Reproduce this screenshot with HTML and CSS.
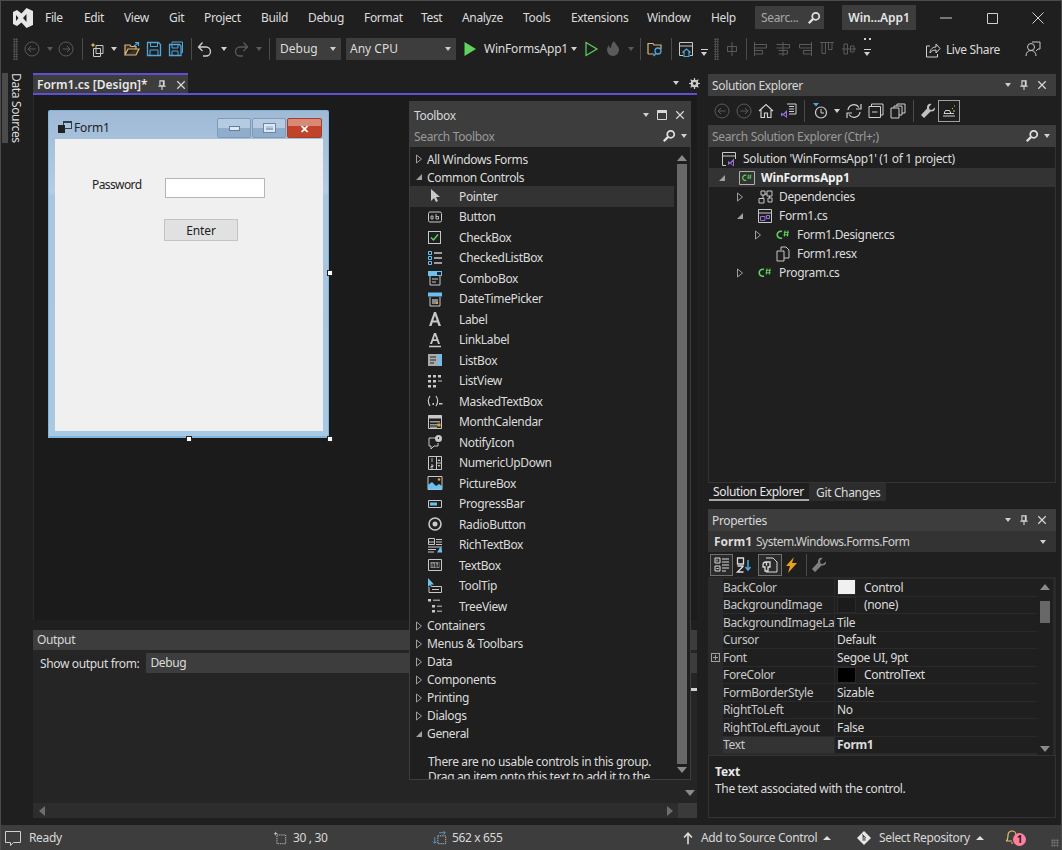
FILE: index.html
```html
<!DOCTYPE html>
<html lang="en">
<head>
    <meta charset="UTF-8">
    <title>WinFormsApp1 - Visual Studio</title>
    <link rel="stylesheet" href="styles.css">
</head>
<body>
<svg class="sprite" width="0" height="0">
    <defs>
        <symbol id="back" viewBox="0 0 16 16"><circle cx="8" cy="8" r="7" fill="none" stroke="currentColor"/><path d="M11.5 8h-7M7 5L4 8l3 3" fill="none" stroke="currentColor"/></symbol>
        <symbol id="fwd" viewBox="0 0 16 16"><circle cx="8" cy="8" r="7" fill="none" stroke="currentColor"/><path d="M4.5 8h7M9 5l3 3-3 3" fill="none" stroke="currentColor"/></symbol>
        <symbol id="close" viewBox="0 0 12 12"><path d="M1.5 1.5l9 9M10.5 1.5l-9 9" stroke="currentColor" stroke-width="1.4"/></symbol>
        <symbol id="pin" viewBox="0 0 12 12"><path d="M3.5 1h5v6h-5zM1.5 7.5h9M6 7.5V12" fill="none" stroke="currentColor" stroke-width="1.3"/><path d="M7 1h1.5v6H7z" fill="currentColor"/></symbol>
        <symbol id="search" viewBox="0 0 16 16"><circle cx="10" cy="6" r="4" fill="none" stroke="currentColor" stroke-width="2"/><path d="M7 9l-5 5" stroke="currentColor" stroke-width="2.6"/></symbol>
        <symbol id="expand" viewBox="0 0 8 10"><path d="M1.5 1v8L6.5 5z" fill="none" stroke="currentColor"/></symbol>
        <symbol id="open" viewBox="0 0 8 10"><path d="M7 2v6H1z" fill="currentColor"/></symbol>
        <symbol id="csharp" viewBox="0 0 16 16"><path d="M7 4.5A3.5 3.5 0 1 0 7 11" fill="none" stroke="currentColor" stroke-width="1.6"/><path d="M10 3.5l-.7 6M13 3.5l-.7 6M8.8 5.3h5M8.6 7.800h5" stroke="currentColor"/></symbol>
        <!-- toolbox icons -->
        <symbol id="t-pointer" viewBox="0 0 16 16"><path d="M4 1v12l3-3 2 4 2-1-2-4h4z" fill="currentColor"/></symbol>
        <symbol id="t-button" viewBox="0 0 16 16"><rect x="1.5" y="3" width="13" height="10" rx="1.5" fill="none" stroke="currentColor"/><path d="M4 7h2v3H4zM9 5v5h2.5V7.5H9" fill="none" stroke="currentColor" stroke-width=".9"/></symbol>
        <symbol id="t-check" viewBox="0 0 16 16"><rect x="1.5" y="2.5" width="12" height="12" fill="none" stroke="currentColor"/><path d="M4 8.5l2.5 2.5L11 5.5" fill="none" stroke="#5fd35f" stroke-width="1.4"/></symbol>
        <symbol id="t-checklist" viewBox="0 0 16 16"><path d="M1.500 1.500h3v3h-3zM1.500 6.500h3v3h-3zM1.500 11.500h3v3h-3z" fill="none" stroke="#6cc0f0"/><path d="M7 3h8M7 8h8M7 13h8" stroke="currentColor" stroke-width="1.5"/></symbol>
        <symbol id="t-combo" viewBox="0 0 16 16"><path d="M1 1h14v5H1z" fill="#6cc0f0"/><path d="M3 6v9h10V6" fill="none" stroke="currentColor"/><path d="M5 9h6M5 12h4" stroke="currentColor"/><path d="M10 2h4v3h-4z" fill="#222"/></symbol>
        <symbol id="t-date" viewBox="0 0 16 16"><path d="M1 1.500h14v4H1z" fill="#6cc0f0"/><path d="M3 6v9h10V6" fill="none" stroke="currentColor"/><path d="M5 8h6v5H5z" fill="#888"/><path d="M9 11h2v2H9z" fill="#f0a030"/></symbol>
        <symbol id="t-label" viewBox="0 0 16 16"><path d="M2 15L7 1h2l5 14h-2.500l-1.200-3.500H5.700L4.500 15zM6.300 9.500h3.400L8 4.500z" fill="currentColor" fill-rule="evenodd"/></symbol>
        <symbol id="t-link" viewBox="0 0 16 16"><path d="M3 12L7 1h2l4 11h-2l-1-3H6l-1 3zM6.600 7.300h2.800L8 3.500z" fill="currentColor" fill-rule="evenodd"/><path d="M2 14.500h12" stroke="currentColor" stroke-width="1.500"/></symbol>
        <symbol id="t-listbox" viewBox="0 0 16 16"><path d="M1 2h14v12H1z" fill="#aaa"/><path d="M3 5h6M3 8h6M3 11h4" stroke="#222"/><path d="M10.500 2.500H15v5h-4.500zM10.500 8.500H15v5h-4.500z" fill="#6cc0f0"/></symbol>
        <symbol id="t-listview" viewBox="0 0 16 16"><path d="M1 2h3v2.500H1zM6 2h3v2.500H6zM11 2h3v2.500h-3zM1 7h3v2.500H1zM6 7h3v2.500H6zM1 12h3v2.500H1zM6 12h3v2.500H6z" fill="currentColor"/><path d="M11 8h4" stroke="currentColor"/></symbol>
        <symbol id="t-masked" viewBox="0 0 16 16"><path d="M3 3C1 6 1 10 3 13M9 3c2 3 2 7 0 10" fill="none" stroke="currentColor" stroke-width="1.200"/><path d="M5.500 10h1.500v2H5.500zM12 10h3.500v1.500H12z" fill="currentColor"/></symbol>
        <symbol id="t-month" viewBox="0 0 16 16"><path d="M1.500 1.500h13v13h-13z" fill="none" stroke="currentColor"/><path d="M1.500 1.500h13v3h-13z" fill="currentColor"/><path d="M3 7h10v1.500H3zM3 10h10v1.500H3zM3 12.500h7V14H3z" fill="#999"/><path d="M10.500 9.500h3v3h-3z" fill="#f0a030"/></symbol>
        <symbol id="t-notify" viewBox="0 0 16 16"><path d="M10 4H2v8h2v3l3-3h4V9" fill="none" stroke="currentColor"/><circle cx="11.500" cy="4.500" r="3.500" fill="currentColor"/><path d="M11.500 3v2" stroke="#222"/></symbol>
        <symbol id="t-numeric" viewBox="0 0 16 16"><path d="M1.500 1.500h13v13h-13zM9.500 1.500v13M9.500 8h5" fill="none" stroke="currentColor"/><path d="M5 3v4M4 10h2v1.500H4V13h2" fill="none" stroke="currentColor" stroke-width=".9"/><path d="M12 4l-1.500 2h3zM12 12l-1.500-2h3z" fill="currentColor"/></symbol>
        <symbol id="t-picture" viewBox="0 0 16 16"><path d="M1 1.500h14v13H1z" fill="none" stroke="currentColor"/><path d="M1 14.500V10l4-3 4 4 3-2 3 2v3.500z" fill="#6cc0f0"/><circle cx="12" cy="4.500" r="1.300" fill="#f0a030"/></symbol>
        <symbol id="t-progress" viewBox="0 0 16 16"><path d="M1.500 4.500h13v7h-13z" fill="none" stroke="currentColor"/><path d="M3 6.500h7v3H3z" fill="#6cc0f0"/></symbol>
        <symbol id="t-radio" viewBox="0 0 16 16"><circle cx="8" cy="8" r="6" fill="none" stroke="currentColor" stroke-width="1.600"/><circle cx="8" cy="8" r="2.500" fill="currentColor"/></symbol>
        <symbol id="t-rich" viewBox="0 0 16 16"><path d="M1.500 1.500h6v6h-6zM1.500 5h6" fill="none" stroke="currentColor"/><path d="M9 2.500h6M9 5h6M9 7.500h6M1 10h14M1 12.500h8M1 15h6" stroke="currentColor"/><path d="M10 15.500l3-5h1.500l.7 5z" fill="#6cc0f0"/></symbol>
        <symbol id="t-textbox" viewBox="0 0 16 16"><path d="M1.500 2.500h13v11h-13z" fill="none" stroke="currentColor"/><path d="M3.500 5h9v6h-9z" fill="#888"/><path d="M5 10V7h1.500v3M8.500 5.500V10h1.500V8H8.500M11.500 5.500V10" fill="none" stroke="#222" stroke-width=".8"/></symbol>
        <symbol id="t-tooltip" viewBox="0 0 16 16"><path d="M1 0v9l2-2 1 2 1-.5-1-2h3z" fill="#6cc0f0"/><path d="M4.500 8.500h10v6H2V9" fill="none" stroke="currentColor"/><path d="M5 11.500h7" stroke="currentColor"/></symbol>
        <symbol id="t-tree" viewBox="0 0 16 16"><path d="M1 1h3v2.500H1zM5 7h3v2.500H5zM5 12h3v2.500H5z" fill="currentColor"/><path d="M6 2.200h7M10 8.200h5M10 13.200h5" stroke="currentColor"/></symbol>
        <!-- properties window -->
        <symbol id="p-cat" viewBox="0 0 16 16"><path d="M1 1h5v5H1zM1 9h5v5H1z" fill="none" stroke="currentColor"/><path d="M3 2.500v2M2.500 11.500h2M8 2h7M8 5h7M8 8h7M8 11h7M8 14h4" stroke="currentColor"/></symbol>
        <symbol id="p-az" viewBox="0 0 16 16"><path d="M1.500 1h6v6h-6zM1.500 9h6M7.500 9l-6 6h6" fill="none" stroke="currentColor" stroke-width="1.300"/><path d="M12 3v10M9.500 10l2.500 3 2.500-3" fill="none" stroke="#4ea6dc" stroke-width="1.500"/></symbol>
        <symbol id="p-page" viewBox="0 0 16 16"><path d="M4 1h7l4 4v10H4" fill="none" stroke="currentColor"/><path d="M8 5H4a3 3 0 0 0-3 3v2h2v4h3v-4h2zM4.500 5.500v3" fill="none" stroke="currentColor" stroke-width="1.300"/></symbol>
        <symbol id="p-bolt" viewBox="0 0 16 16"><path d="M10 0L2 9h4l-2 7 9-10H8z" fill="#e8a317"/></symbol>
        <symbol id="p-wrench" viewBox="0 0 16 16"><path d="M15 4.500L12 7l-2.500-.5L9 4l2.500-3C9 0 6.500 2 7 5.500L1 12l3 3 6.500-6.500c3 .5 5-1.500 4.500-4z" fill="currentColor"/></symbol>
    </defs>
</svg>

<div class="ide">
    <header class="titlebar">
        <svg class="logo" viewBox="0 0 20 20"><path d="M13.500 0L20 3v14l-6.500 3-5-5.500L4 18l-4-2V4l4-2 4.500 3.500zM13.500 6l-3.500 4 3.500 4zM3 7v6l2.500-3z" fill-rule="evenodd"/></svg>
        <nav class="menu">
            <span>File</span><span>Edit</span><span>View</span><span>Git</span><span>Project</span><span>Build</span><span>Debug</span><span>Format</span><span>Test</span><span>Analyze</span><span>Tools</span><span>Extensions</span><span>Window</span><span>Help</span>
        </nav>
        <div class="title-search">Searc...<svg class="ico14"><use href="#search"/></svg></div>
        <div class="title-sln">Win...App1</div>
        <div class="winctl">
            <svg viewBox="0 0 14 14"><path d="M1 7h12" stroke="currentColor"/></svg>
            <svg viewBox="0 0 14 14"><path d="M2.500 2.500h10v10h-10z" fill="none" stroke="currentColor"/></svg>
            <svg viewBox="0 0 14 14"><path d="M1.500 1.500l11 11M12.500 1.500l-11 11" stroke="currentColor"/></svg>
        </div>
    </header>

    <div class="toolbar">
        <i></i>
        <span class="grip"></span>
        <svg class="ico dis"><use href="#back"/></svg>
        <span class="dd dis"></span>
        <svg class="ico dis"><use href="#fwd"/></svg>
        <span class="sep"></span>
        <svg class="ico" viewBox="0 0 16 16"><path d="M3 1.500l.7 1.800 1.800.7-1.800.7L3 6.500l-.7-1.800L.500 4l1.800-.7z" fill="#e8c860"/><path d="M6 4.500h7v8H6zM3.500 7.500h7v8h-7z" fill="#1f1f1f" stroke="#c8c8c8"/></svg>
        <span class="dd"></span>
        <svg class="ico" viewBox="0 0 16 16"><path d="M1 14V4h5l1 1.500h5V8H4l-3 6h11l3-6h-3" fill="#3a3226" stroke="#dcb67a" stroke-width="1.200"/><path d="M10 5l4-3M11 1.500h3.500V5" fill="none" stroke="#4ea6dc" stroke-width="1.200"/></svg>
        <svg class="ico" viewBox="0 0 16 16"><path d="M1.500 1.500h11l2 2v11h-13z" fill="none" stroke="#4ea6dc" stroke-width="1.300"/><path d="M4.500 1.500v4h7v-4M4 14v-5h8v5" fill="none" stroke="#4ea6dc"/></svg>
        <svg class="ico" viewBox="0 0 16 16"><path d="M4 2.500V1h10.500v10.500H13" fill="none" stroke="#4ea6dc"/><path d="M1.500 3.500h10l1.500 1.500v9.500H1.500z" fill="none" stroke="#4ea6dc" stroke-width="1.300"/><path d="M4 3.500v3.500h6V3.500M4 14v-4h6v4" fill="none" stroke="#4ea6dc"/></svg>
        <span class="sep"></span>
        <svg class="ico" viewBox="0 0 16 16"><path d="M2 6h7a4.500 4.500 0 0 1 0 9H6M5.500 1.500L1.500 6l4 4" fill="none" stroke="#d0d0d0" stroke-width="1.300"/></svg>
        <span class="dd"></span>
        <svg class="ico dis" viewBox="0 0 16 16"><path d="M14 6H7a4.500 4.500 0 0 0 0 9h3M10.500 1.500l4 4.500-4 4" fill="none" stroke="currentColor" stroke-width="1.300"/></svg>
        <span class="dd dis"></span>
        <span class="sep"></span>
        <i></i>
        <div class="combo">Debug<span class="dd"></span></div>
        <i></i>
        <div class="combo">Any CPU<span class="dd"></span></div>
        <svg class="ico" viewBox="0 0 16 16"><path d="M2.500 1l11.500 7-11.500 7z" fill="#5fd35f"/></svg>
        <span class="run-name">WinFormsApp1</span>
        <span class="dd"></span>
        <svg class="ico" viewBox="0 0 16 16"><path d="M3 1.500L14 8 3 14.500z" fill="none" stroke="#5fd35f" stroke-width="1.200"/></svg>
        <svg class="ico dis" viewBox="0 0 16 16"><path d="M9 0c1 3 5 5 5 9a6 6 0 0 1-12 0c0-2 1-3.500 2-5 0 2 1 3 2 3 0-3 1-5 3-7z" fill="currentColor"/></svg>
        <span class="dd dis"></span>
        <span class="sep"></span>
        <svg class="ico" viewBox="0 0 16 16"><path d="M1 13V2.500h5l1 1.500h7v4M1 13h6" fill="none" stroke="#dcb67a" stroke-width="1.200"/><circle cx="11" cy="10" r="3" fill="none" stroke="#4ea6dc" stroke-width="1.300"/><path d="M9 12.500L6.500 15" stroke="#4ea6dc" stroke-width="1.500"/></svg>
        <span class="sep"></span>
        <svg class="ico" viewBox="0 0 16 16"><path d="M5 14.500H1.500v-13h13v13H12M1.500 5h13" fill="none" stroke="#c8c8c8"/><path d="M4.500 11.500L8.500 8l4 3.500M6 10.500v5h5v-5" fill="none" stroke="#4ea6dc" stroke-width="1.200"/></svg>
        <span class="dd-more"></span>
        <span class="grip"></span>
        <svg class="ico dis" viewBox="0 0 16 16"><path d="M8 1v14M3.500 5.500h9v5h-9z" fill="none" stroke="currentColor"/></svg>
        <span class="sep"></span>
        <svg class="ico dis" viewBox="0 0 16 16"><path d="M1.500 1v14M1.500 3.500h12v3.500h-12M1.500 9.500h8V13h-8" fill="none" stroke="currentColor"/></svg>
        <svg class="ico dis" viewBox="0 0 16 16"><path d="M8 1v14M1.500 3.500h13V7h-13M3.500 9.500h9V13h-9" fill="none" stroke="currentColor"/></svg>
        <svg class="ico dis" viewBox="0 0 16 16"><path d="M14.500 1v14M14.500 3.500h-12V7h12M14.500 9.500h-8V13h8" fill="none" stroke="currentColor"/></svg>
        <svg class="ico dis" viewBox="0 0 16 16"><path d="M1 1.500h14M3 1.500v11h3.500v-11M9.500 1.500v7H13v-7" fill="none" stroke="currentColor"/></svg>
        <svg class="ico dis" viewBox="0 0 16 16"><path d="M1 8h14M3 3h3.500v10H3zM9.500 5H13v6H9.500z" fill="none" stroke="currentColor"/></svg>
        <span class="dd-more dots"></span>
        <div class="live-share">
            <svg class="ico" viewBox="0 0 16 16"><path d="M5 4H1.500v11h11v-3M5 11c0-4 3-6 6-6V2l4 4.500L11 11V8c-3 0-5 1-6 3z" fill="none" stroke="#d0d0d0"/></svg>
            <span>Live Share</span>
        </div>
        <svg class="ico" viewBox="0 0 16 16"><circle cx="6" cy="6" r="3.500" fill="none" stroke="#c8c8c8"/><path d="M1 15c0-3.500 2-5.500 5-5.500s5 2 5 5.500M7 1h8v7h-2l-2 2" fill="none" stroke="#c8c8c8"/></svg>
    </div>

    <main class="workspace">
        <aside class="side-tabs">
            <div class="side-tab"><span>Data Sources</span></div>
        </aside>

        <section class="center">
            <div class="doc-strip">
                <div class="doc-tab">
                    <span>Form1.cs [Design]*</span>
                    <svg class="ico10"><use href="#pin"/></svg>
                    <svg class="ico10"><use href="#close"/></svg>
                </div>
                <span class="dd strip-dd"></span>
                <svg class="gear" viewBox="0 0 12 12"><circle cx="6" cy="6" r="3.200" fill="none" stroke="#d0d0d0" stroke-width="2"/><path d="M6 0v12M0 6h12M1.800 1.800l8.400 8.400M10.200 1.800l-8.400 8.400" stroke="#d0d0d0" stroke-width="1.300"/><circle cx="6" cy="6" r="1.600" fill="#1f1f1f"/></svg>
            </div>

            <div class="designer">
                <div class="form-window">
                    <div class="form-title">
                        <svg class="form-icon" viewBox="0 0 14 12"><path d="M5 0h9v8H5z" fill="#2c3e50"/><path d="M6 2h7v5H6z" fill="#a9c4de"/><path d="M0 4h7v8H0z" fill="#222"/></svg>
                        <span>Form1</span>
                        <div class="form-btns">
                            <span class="form-btn"><b class="glyph-min"></b></span>
                            <span class="form-btn"><b class="glyph-max"></b></span>
                            <span class="form-btn form-close">✕</span>
                        </div>
                    </div>
                    <div class="form-client">
                        <span class="form-label">Password</span>
                        <span class="form-input"></span>
                        <span class="form-button">Enter</span>
                    </div>
                    <span class="handle h-right"></span>
                    <span class="handle h-bottom"></span>
                    <span class="handle h-corner"></span>
                </div>
            </div>

            <div class="output">
                <div class="panel-head">Output</div>
                <div class="output-bar">
                    <span>Show output from:</span>
                    <div class="output-combo">Debug</div>
                </div>
                <div class="output-body">
                    <span class="output-grip"></span>
                    <svg class="output-down" viewBox="0 0 10 6"><path d="M0 0h10L5 6z"/></svg>
                </div>
                <div class="output-hscroll">
                    <svg viewBox="0 0 6 10"><path d="M6 0v10L0 5z"/></svg>
                    <svg viewBox="0 0 6 10"><path d="M0 0v10l6-5z"/></svg>
                    <span class="output-corner"></span>
                </div>
            </div>

            <div class="toolbox">
                <div class="panel-head">
                    <span>Toolbox</span>
                    <div class="panel-btns">
                        <span class="dd"></span>
                        <svg class="ico10" viewBox="0 0 10 10"><path d="M.5.500h9v9h-9z" fill="none" stroke="currentColor"/><path d="M.5.500h9V3h-9z" fill="currentColor"/></svg>
                        <svg class="ico10"><use href="#close"/></svg>
                    </div>
                </div>
                <div class="search-row">
                    <span>Search Toolbox</span>
                    <svg class="ico14"><use href="#search"/></svg>
                    <span class="dd"></span>
                </div>
                <div class="toolbox-body">
                    <ul class="tbx-list">
                        <li class="cat"><svg class="arrow"><use href="#expand"/></svg>All Windows Forms</li>
                        <li class="cat"><svg class="arrow"><use href="#open"/></svg>Common Controls</li>
                        <li class="item hover"><svg><use href="#t-pointer"/></svg>Pointer</li>
                        <li class="item"><svg><use href="#t-button"/></svg>Button</li>
                        <li class="item"><svg><use href="#t-check"/></svg>CheckBox</li>
                        <li class="item"><svg><use href="#t-checklist"/></svg>CheckedListBox</li>
                        <li class="item"><svg><use href="#t-combo"/></svg>ComboBox</li>
                        <li class="item"><svg><use href="#t-date"/></svg>DateTimePicker</li>
                        <li class="item"><svg><use href="#t-label"/></svg>Label</li>
                        <li class="item"><svg><use href="#t-link"/></svg>LinkLabel</li>
                        <li class="item"><svg><use href="#t-listbox"/></svg>ListBox</li>
                        <li class="item"><svg><use href="#t-listview"/></svg>ListView</li>
                        <li class="item"><svg><use href="#t-masked"/></svg>MaskedTextBox</li>
                        <li class="item"><svg><use href="#t-month"/></svg>MonthCalendar</li>
                        <li class="item"><svg><use href="#t-notify"/></svg>NotifyIcon</li>
                        <li class="item"><svg><use href="#t-numeric"/></svg>NumericUpDown</li>
                        <li class="item"><svg><use href="#t-picture"/></svg>PictureBox</li>
                        <li class="item"><svg><use href="#t-progress"/></svg>ProgressBar</li>
                        <li class="item"><svg><use href="#t-radio"/></svg>RadioButton</li>
                        <li class="item"><svg><use href="#t-rich"/></svg>RichTextBox</li>
                        <li class="item"><svg><use href="#t-textbox"/></svg>TextBox</li>
                        <li class="item"><svg><use href="#t-tooltip"/></svg>ToolTip</li>
                        <li class="item"><svg><use href="#t-tree"/></svg>TreeView</li>
                        <li class="cat"><svg class="arrow"><use href="#expand"/></svg>Containers</li>
                        <li class="cat"><svg class="arrow"><use href="#expand"/></svg>Menus &amp; Toolbars</li>
                        <li class="cat"><svg class="arrow"><use href="#expand"/></svg>Data</li>
                        <li class="cat"><svg class="arrow"><use href="#expand"/></svg>Components</li>
                        <li class="cat"><svg class="arrow"><use href="#expand"/></svg>Printing</li>
                        <li class="cat"><svg class="arrow"><use href="#expand"/></svg>Dialogs</li>
                        <li class="cat"><svg class="arrow"><use href="#open"/></svg>General</li>
                        <li class="note">There are no usable controls in this group.<br>Drag an item onto this text to add it to the</li>
                    </ul>
                    <div class="vscroll">
                        <svg viewBox="0 0 10 6"><path d="M0 6h10L5 0z"/></svg>
                        <span class="thumb"></span>
                        <svg viewBox="0 0 10 6"><path d="M0 0h10L5 6z"/></svg>
                    </div>
                </div>
            </div>
        </section>

        <section class="right">
            <div class="sol-explorer">
                <div class="panel-head">
                    <span>Solution Explorer</span>
                    <div class="panel-btns">
                        <span class="dd"></span>
                        <svg class="ico10"><use href="#pin"/></svg>
                        <svg class="ico10"><use href="#close"/></svg>
                    </div>
                </div>
                <div class="sol-tools">
                    <svg class="ico dis"><use href="#back"/></svg>
                    <svg class="ico dis"><use href="#fwd"/></svg>
                    <svg class="ico" viewBox="0 0 16 16"><path d="M1 8l7-6.500L15 8M3 7v7.500h3.500V10h3v4.500H13V7" fill="none" stroke="#d0d0d0" stroke-width="1.200"/></svg>
                    <svg class="ico" viewBox="0 0 16 16"><path d="M6 1h9v10H8M8 3.500h5M8 6h5M8 8.500h5" fill="none" stroke="#d0d0d0"/><path d="M0 9.500l2 1.500 4-4v8l-4-3-2 1.500zM3 11.500l2 1.500V10z" fill="#9a6fe0" fill-rule="evenodd"/></svg>
                    <span class="sep"></span>
                    <svg class="ico" viewBox="0 0 16 16"><path d="M1 0h6L4 3.500z" fill="#4ea6dc"/><circle cx="9" cy="9.500" r="5.500" fill="none" stroke="#d0d0d0" stroke-width="1.200"/><path d="M9 6v4h3" fill="none" stroke="#d0d0d0"/></svg>
                    <span class="dd"></span>
                    <svg class="ico" viewBox="0 0 16 16"><path d="M2 7a6 6 0 0 1 11-2.500M14 9a6 6 0 0 1-11 2.500" fill="none" stroke="#d0d0d0" stroke-width="1.200"/><path d="M15 1v5h-5M1 15v-5h5" fill="none" stroke="#d0d0d0" stroke-width="1.200"/></svg>
                    <svg class="ico" viewBox="0 0 16 16"><path d="M1 3.500h11.500v11H1zM3.500 3.500V1h11.500v11h-2.500M4 9h5.500" fill="none" stroke="#d0d0d0"/></svg>
                    <svg class="ico" viewBox="0 0 16 16"><path d="M1 5h8v10H1zM4 5V3h8v9H9M7 3V1h8v9h-3" fill="none" stroke="#d0d0d0"/></svg>
                    <span class="sep"></span>
                    <svg class="ico wrench"><use href="#p-wrench"/></svg>
                    <span class="tool-active">
                        <svg class="ico" viewBox="0 0 16 16"><path d="M2 13h12M3 10.500l1.500-3h4l1.500 3" fill="none" stroke="#d0d0d0"/><path d="M3 10.500h10" stroke="#d0d0d0"/><path d="M11 6l1-1M13 3h1M12 8h2" stroke="#e8c860"/></svg>
                    </span>
                </div>
                <div class="search-row">
                    <span>Search Solution Explorer (Ctrl+;)</span>
                    <svg class="ico14"><use href="#search"/></svg>
                    <span class="dd"></span>
                </div>
                <div class="sol-tree">
                    <div class="node root">
                        <svg class="ico" viewBox="0 0 16 16"><path d="M5 14.500H1.500v-13h13V8M1.500 5h13" fill="none" stroke="#c8c8c8"/><path d="M7 11l2 1.500 4-4v8l-4-3-2 1.500zM10 13.500l2 1.500v-3.500z" fill="#9a6fe0" fill-rule="evenodd" transform="translate(0,-1)"/></svg>
                        <span>Solution 'WinFormsApp1' (1 of 1 project)</span>
                    </div>
                    <div class="node lvl1 selected">
                        <svg class="arrow"><use href="#open"/></svg>
                        <svg class="ico csharp" viewBox="0 0 16 16"><path d="M.5 1.500h15v13H.5z" fill="none" stroke="#b0b0b0"/><use href="#csharp" x="2" y="2" width="12" height="12"/></svg>
                        <b>WinFormsApp1</b>
                    </div>
                    <div class="node lvl2">
                        <svg class="arrow"><use href="#expand"/></svg>
                        <svg class="ico" viewBox="0 0 16 16"><path d="M2 9.500h5V14H2zM10 2h5v5h-5zM4 2h4v4H4zM6 6v3.500M10 5H8M11 9h4v4h-4zM12.500 7v2" fill="none" stroke="#c8c8c8"/></svg>
                        <span>Dependencies</span>
                    </div>
                    <div class="node lvl2">
                        <svg class="arrow"><use href="#open"/></svg>
                        <svg class="ico" viewBox="0 0 16 16"><path d="M1.500 1.500h13v13h-13zM1.500 5h13" fill="none" stroke="#c8c8c8"/><path d="M3.500 8.500h4.500v4h-4.500zM9.500 7.500h3v3h-3z" fill="none" stroke="#9a6fe0"/></svg>
                        <span>Form1.cs</span>
                    </div>
                    <div class="node lvl3">
                        <svg class="arrow"><use href="#expand"/></svg>
                        <svg class="ico csharp"><use href="#csharp"/></svg>
                        <span>Form1.Designer.cs</span>
                    </div>
                    <div class="node lvl3">
                        <span class="arrow"></span>
                        <svg class="ico" viewBox="0 0 16 16"><path d="M6 1h5l3 3v8H9M6 1v3M6 5H2v10h7V5z" fill="none" stroke="#c8c8c8"/></svg>
                        <span>Form1.resx</span>
                    </div>
                    <div class="node lvl2">
                        <svg class="arrow"><use href="#expand"/></svg>
                        <svg class="ico csharp"><use href="#csharp"/></svg>
                        <span>Program.cs</span>
                    </div>
                </div>
                <div class="sol-tabs">
                    <span class="sol-tab active">Solution Explorer</span>
                    <span class="sol-tab">Git Changes</span>
                </div>
            </div>

            <div class="properties">
                <div class="panel-head">
                    <span>Properties</span>
                    <div class="panel-btns">
                        <span class="dd"></span>
                        <svg class="ico10"><use href="#pin"/></svg>
                        <svg class="ico10"><use href="#close"/></svg>
                    </div>
                </div>
                <div class="prop-object"><b>Form1</b><span>System.Windows.Forms.Form</span><span class="dd"></span></div>
                <div class="prop-tools">
                    <span class="prop-on"><svg class="ico"><use href="#p-cat"/></svg></span>
                    <span class="prop-off"><svg class="ico"><use href="#p-az"/></svg></span>
                    <span class="prop-on page"><svg class="ico"><use href="#p-page"/></svg></span>
                    <span class="prop-off bolt"><svg class="ico"><use href="#p-bolt"/></svg></span>
                    <span class="sep"></span>
                    <span class="prop-off wrench"><svg class="ico"><use href="#p-wrench"/></svg></span>
                </div>
                <div class="prop-body">
                    <div class="prop-grid">
                        <div class="prop"><span>BackColor</span><span><i class="swatch light"></i>Control</span></div>
                        <div class="prop"><span>BackgroundImage</span><span><i class="swatch dark"></i>(none)</span></div>
                        <div class="prop"><span>BackgroundImageLayout</span><span>Tile</span></div>
                        <div class="prop"><span>Cursor</span><span>Default</span></div>
                        <div class="prop"><span>Font</span><span>Segoe UI, 9pt</span><em class="plus"></em></div>
                        <div class="prop"><span>ForeColor</span><span><i class="swatch black"></i>ControlText</span></div>
                        <div class="prop"><span>FormBorderStyle</span><span>Sizable</span></div>
                        <div class="prop"><span>RightToLeft</span><span>No</span></div>
                        <div class="prop"><span>RightToLeftLayout</span><span>False</span></div>
                        <div class="prop sel"><span>Text</span><span><b>Form1</b></span></div>
                    </div>
                    <div class="vscroll prop-scroll">
                        <svg viewBox="0 0 10 6"><path d="M0 6h10L5 0z"/></svg>
                        <span class="thumb-track"><span class="thumb"></span></span>
                        <svg viewBox="0 0 10 6"><path d="M0 0h10L5 6z"/></svg>
                    </div>
                </div>
                <div class="prop-desc">
                    <b>Text</b>
                    <p>The text associated with the control.</p>
                </div>
            </div>
        </section>
    </main>

    <footer class="statusbar">
        <svg class="ico st-bubble" viewBox="0 0 16 16"><path d="M.5 1.500h15v11H8.500l-3 3v-3h-5z" fill="none" stroke="#d0d0d0"/></svg>
        <span>Ready</span>
        <svg class="ico" viewBox="0 0 16 16"><path d="M4.500 4.500h10v10h-10z" fill="none" stroke="#c8c8c8" stroke-dasharray="1.500 1"/><path d="M1 3h4M3 1v4" stroke="#c8c8c8"/></svg>
        <span>30 , 30</span>
        <svg class="ico" viewBox="0 0 16 16"><path d="M5.500 5.500h9v9h-9z" fill="none" stroke="#c8c8c8" stroke-dasharray="1.500 1"/><path d="M7 2h7M12 0l2 2-2 2M2 7v7M0 12l2 2 2-2" fill="none" stroke="#4ea6dc"/></svg>
        <span>562 x 655</span>
        <svg class="ico" viewBox="0 0 16 16"><path d="M8 15V3M3.500 7.500L8 2.500l4.500 5" fill="none" stroke="#e0e0e0" stroke-width="1.800"/></svg>
        <span class="st-drop">Add to Source Control<i class="up"></i></span>
        <svg class="ico" viewBox="0 0 16 16"><path d="M8 0l8 8-8 8-8-8z" fill="#e8e8e8"/><path d="M6 4l4 4M7 5v6M9 8l0 3" stroke="#3d3d3d" stroke-width="1.200"/></svg>
        <span class="st-drop">Select Repository<i class="up"></i></span>
        <span class="bell">
            <svg class="ico" viewBox="0 0 16 16"><path d="M2 13c2-1 2-3 2-6a4 4 0 0 1 8 0c0 1 0 2 .5 3M2 13h6M7 15h2" fill="none" stroke="#e6c36a" stroke-width="1.200"/></svg>
            <b>1</b>
        </span>
        <span class="resize-grip"></span>
    </footer>
</div>
</body>
</html>
```

FILE: styles.css
```css
* { box-sizing: border-box; }
html, body { margin: 0; height: 100%; overflow: hidden; }
body { background: #1f1f1f; color: #dcdcdc; font-family: "Noto Sans", "Open Sans", sans-serif; font-size: 12px; letter-spacing: -0.35px; }
ul, p { margin: 0; padding: 0; list-style: none; }
.sprite { position: absolute; }

.ide { width: 1062px; height: 850px; display: grid; grid-template-rows: 32px 31px 761px 25px; border: 1px solid #4b4b4b; border-bottom: 0; }

/* small shared bits */
.ico { width: 16px; height: 16px; flex: none; overflow: visible; }
.ico10 { width: 10px; height: 10px; flex: none; color: #d8d8d8; }
.ico14 { width: 14px; height: 14px; flex: none; color: #e0e0e0; }
.dis { color: #5a5a5a; }
.dd { width: 0; height: 0; border: 3.5px solid transparent; border-top: 4px solid #d0d0d0; border-bottom: 0; flex: none; }
.dd.dis { border-top-color: #5a5a5a; }
.dd-more { width: 7px; height: 8px; margin-top: 8px; border-top: 1px solid #d0d0d0; position: relative; }
.dd-more::after { content: ""; position: absolute; left: 0; top: 2px; border: 3.5px solid transparent; border-top: 4px solid #d0d0d0; border-bottom: 0; }
.dots::before { content: ""; position: absolute; left: 0; top: -12px; width: 2px; height: 2px; background: #d0d0d0; box-shadow: 5px 0 #d0d0d0; }
.sep { width: 1px; height: 22px; background: #4a4a4a; flex: none; }
.grip { width: 5px; height: 22px; background: radial-gradient(circle, #5a5a5a 0.8px, transparent 1px) 0 0 / 2.5px 2.5px; }

/* title bar */
.titlebar { display: flex; align-items: center; padding-top: 1px; }
.logo { width: 20px; height: 20px; margin-left: 12px; fill: #e6e6e6; flex: none; }
.menu { display: grid; grid-template-columns: 39px 40px 45px 35px 57px 47px 56px 57px 41px 61px 48px 76px 64px 44px; margin-left: 12px; }
.title-search { width: 69px; height: 23px; background: #3d3d3d; color: #a8a8a8; display: flex; align-items: center; justify-content: space-between; padding: 0 3px 0 6px; }
.title-sln { width: 74px; height: 25px; margin-left: 18px; background: #3d3d3d; font-weight: 600; letter-spacing: -0.1px; color: #e6e6e6; display: flex; align-items: center; justify-content: center; }
.winctl { display: flex; gap: 32px; margin-left: 23px; color: #d0d0d0; }
.winctl svg { width: 14px; height: 14px; }

/* main toolbar */
.toolbar { display: grid; align-items: center; justify-items: center; grid-template-columns: 11px 6px 28px 8px 24px 8px 24px 8px 28px 16px 28px 2px 26px 12px 22px 14px 6px 4px 65px 5px 110px 28px 81px 18px 16px 28px 8px 10px 20px 12px 18px 18px 6px 26px 2px 28px 16px 28px 16px 28px 8px 1fr 56px; }
.combo { width: 100%; height: 22px; background: #3d3d3d; display: flex; align-items: center; justify-content: space-between; padding: 0 5px 0 4px; letter-spacing: 0; }
.run-name { justify-self: start; white-space: nowrap; letter-spacing: -0.2px; }
.live-share { justify-self: end; display: flex; align-items: center; gap: 5px; margin-top: 2px; margin-right: 5px; }

/* workspace */
.workspace { display: grid; grid-template-columns: 32px 664px 348px; padding: 9px 0 7px; min-height: 0; }
.side-tab { width: 23px; height: 70px; border-left: 6px solid #4b4b4b; margin-left: 1px; display: flex; align-items: center; justify-content: center; }
.side-tab span { writing-mode: vertical-rl; white-space: nowrap; }

.center { position: relative; display: flex; flex-direction: column; min-height: 0; }
.doc-strip { height: 22px; display: flex; align-items: stretch; border-bottom: 2px solid #5e50d6; flex: none; }
.doc-tab { width: 155px; background: #3d3d3d; border-top: 2px solid #5e50d6; display: flex; align-items: center; padding: 1px 3px 0 4px; font-weight: 600; letter-spacing: 0; color: #e8e8e8; gap: 9px; }
.doc-tab span { white-space: nowrap; flex: 1; }
.strip-dd { align-self: center; margin-left: auto; }
.gear { width: 11px; height: 11px; margin: 0 -3px 0 10px; align-self: center; }

.designer { height: 525px; background: #1b1b1b; padding: 15px 14px; flex: none; border-left: 1px solid #2a2a2a; }

/* the form on the design surface */
.form-window { width: 281px; height: 328px; background: linear-gradient(#a0bad6, #b4cde4 25%, #a9c6e0 26%, #a9c8e2); border: 1px solid #7fb4dc; border-bottom-width: 2px; border-radius: 2px 2px 0 0; position: relative; color: #222; padding: 0 5px 5px 6px; display: flex; flex-direction: column; letter-spacing: -0.15px; }
.form-title { height: 28px; display: flex; align-items: center; flex: none; gap: 2px; padding: 4px 0 0 3px; }
.form-icon { width: 14px; height: 12px; }
.form-btns { margin-left: auto; display: flex; gap: 1px; align-self: flex-start; margin-top: 3px; margin-right: 1px; }
.form-btn { width: 34px; height: 20px; border: 1px solid #7d9cbc; border-radius: 2px; background: linear-gradient(#b6cbe1 50%, #90aecb 50%); display: flex; align-items: center; justify-content: center; }
.form-close { width: 35px; background: linear-gradient(#d98976 40%, #c0432a 40%); border-color: #a04030; color: #fff; font-weight: 700; font-size: 11px; }
.glyph-min { width: 11px; height: 5px; background: #dfe8f1; border: 1px solid #5f7f9f; }
.glyph-max { width: 11px; height: 8px; border: 2px solid #dfe8f1; outline: 1px solid #6a88a6; outline-offset: -0.5px; }
.form-client { flex: 1; background: #f0f0f0; position: relative; }
.form-label { position: absolute; left: 37px; top: 37px; letter-spacing: -0.6px; }
.form-input { position: absolute; left: 110px; top: 39px; width: 100px; height: 20px; background: #fff; border: 1px solid #b5b5b5; }
.form-button { position: absolute; left: 109px; top: 80px; width: 74px; height: 22px; background: #e1e1e1; border: 1px solid #c4c4c4; display: flex; align-items: center; justify-content: center; }
.handle { position: absolute; width: 6px; height: 6px; background: #fff; border: 1px solid #222; }
.h-right { right: -5px; top: 159px; }
.h-bottom { left: 137px; bottom: -6px; }
.h-corner { right: -5px; bottom: -6px; }

/* output */
.output { margin-top: 10px; height: 188px; background: #252525; display: flex; flex-direction: column; flex: none; }
.panel-head { height: 22px; background: #3d3d3d; display: flex; align-items: center; justify-content: space-between; padding: 0 4px; flex: none; color: #d8d8d8; }
.output .panel-head { height: 20px; padding-bottom: 1px; }
.output-bar { height: 26px; display: flex; align-items: center; padding-left: 7px; gap: 7px; flex: none; }
.output-combo { flex: 1; height: 20px; background: #3d3d3d; padding: 0 4px; line-height: 19px; }
.output-body { flex: 1; position: relative; }
.output-grip { position: absolute; right: 0; top: 12px; width: 8px; height: 3px; background: #d0d0d0; }
.output-down { position: absolute; right: 2px; bottom: 7px; width: 10px; height: 6px; fill: #8a8a8a; }
.output-hscroll { height: 15px; background: #2d2d2d; display: flex; align-items: center; padding: 0 24px 0 6px; justify-content: space-between; position: relative; flex: none; }
.output-hscroll svg { width: 6px; height: 10px; fill: #6e6e6e; }
.output-corner { position: absolute; right: 0; top: 0; width: 19px; height: 15px; background: #3a3a3a; }

/* floating toolbox */
.toolbox { position: absolute; left: 376px; top: 28px; width: 282px; height: 679px; background: #1f1f1f; border: 1px solid #3d3d3d; display: flex; flex-direction: column; z-index: 2; }
.toolbox .panel-head { height: 23px; padding-top: 3px; }
.toolbox .panel-btns { margin-right: 1px; }
.toolbox .search-row { padding-right: 3px; }
.panel-btns { display: flex; align-items: center; gap: 8px; margin-right: 5px; }
.search-row { height: 22px; background: #3d3d3d; display: flex; align-items: center; padding: 0 6px 0 4px; color: #9a9a9a; gap: 5px; flex: none; }
.search-row span:first-child { flex: 1; }
.toolbox-body { flex: 1; min-height: 0; display: grid; grid-template-columns: 1fr 15px; overflow: hidden; }
.tbx-list { padding-top: 3px; overflow: hidden; }
.cat { height: 18px; display: flex; align-items: center; padding-left: 5px; }
.arrow { width: 8px; height: 10px; margin-right: 4px; color: #a0a0a0; flex: none; }
.item { height: 20.5px; display: flex; align-items: center; padding-left: 17px; margin-right: 1px; }
.item svg { width: 16px; height: 16px; margin-right: 16px; color: #c8c8c8; }
.item.hover { background: #333; }
.note { padding: 11px 0 0 18px; line-height: 15px; white-space: nowrap; }
.vscroll { display: flex; flex-direction: column; align-items: center; padding: 8px 1px 6px 0; gap: 3px; }
.vscroll svg { width: 10px; height: 6px; fill: #8a8a8a; flex: none; }
.thumb { width: 10px; flex: 1; background: #686868; }

/* right column */
.right { display: flex; flex-direction: column; min-height: 0; padding-top: 1px; margin-left: 11px; margin-right: -11px; }
.sol-explorer { height: 427px; display: flex; flex-direction: column; flex: none; }
.sol-tools { height: 29px; display: grid; grid-template-columns: 28px 16px 28px 18px 12px 20px 14px 20px 24px 20px 10px 20px 22px; align-items: center; justify-items: center; flex: none; }
.tool-active { width: 22px; height: 22px; border: 1px solid #a0a0a0; display: flex; align-items: center; justify-content: center; }
.wrench { color: #c0c0c0; }
.sol-tree { flex: 1; padding-top: 1px; border: 1px solid #333; border-top: 0; }
.node { height: 19px; display: flex; align-items: center; }
.node .arrow { width: 8px; margin-right: 13px; }
.node .ico { margin-right: 6px; }
.node.root { padding-left: 12px; margin-top: 1px; }
.lvl1 { padding-left: 9px; }
.lvl2 { padding-left: 27px; }
.lvl3 { padding-left: 45px; }
.selected { background: #333; }
.selected b { font-weight: 700; letter-spacing: -0.15px; color: #f0f0f0; }
.csharp { color: #5fd35f; }
.sol-tabs { height: 18px; display: flex; flex: none; margin-left: 1px; }
.sol-tab { padding: 0 6px 0 7px; display: flex; align-items: center; background: #2d2d2d; white-space: nowrap; }
.sol-tab.active { background: transparent; border-bottom: 2px solid #a8a8a8; padding: 0 5px 0 4px; width: 100px; color: #e8e8e8; }

.properties { margin-top: 8px; flex: 1; display: flex; flex-direction: column; min-height: 0; }
.prop-object { height: 21px; background: #333; display: flex; align-items: center; gap: 4px; padding: 0 10px 0 6px; flex: none; }
.prop-object b { letter-spacing: 0; }
.prop-object span:nth-child(2) { flex: 1; color: #d0d0d0; letter-spacing: -0.5px; }
.prop-tools { height: 25px; display: flex; align-items: center; padding-left: 2px; flex: none; }
.prop-on, .prop-off { width: 22px; height: 22px; display: flex; align-items: center; justify-content: center; flex: none; }
.prop-on { width: 23px; border: 1px solid #707070; background: #2b2b2b; }
.prop-on.page { width: 24px; margin-left: 3px; }
.prop-off.bolt { width: 20px; }
.prop-tools .sep { margin: 0 3px 0 4px; }
.prop-off.wrench { width: 18px; color: #808080; }
.prop-body { height: 178px; display: grid; grid-template-columns: 1fr 16px; background: #2a2a2a; flex: none; padding: 2px 3px 0 0; }
.prop-grid { display: flex; flex-direction: column; min-width: 0; }
.prop { height: 17.5px; flex: none; display: grid; grid-template-columns: 112px 1fr; margin-left: 15px; position: relative; border-bottom: 1px solid #2a2a2a; background: #1f1f1f; align-items: center; }
.prop > span { white-space: nowrap; overflow: hidden; display: flex; align-items: center; height: 100%; }
.prop > span:first-child { border-right: 1px solid #2a2a2a; color: #c8c8c8; }
.prop > span:nth-child(2) { padding-left: 2px; }
.prop.sel > span:first-child { background: #333; }
.swatch { width: 19px; height: 16px; margin-right: 8px; border: 1px solid #2a2a2a; flex: none; }
.swatch.light { background: #f0f0f0; }
.swatch.dark { background: #1b1b1b; }
.swatch.black { background: #000; }
.plus { position: absolute; left: -12px; top: 4px; width: 9px; height: 9px; border: 1px solid #a0a0a0; background: linear-gradient(#a0a0a0, #a0a0a0) center / 5px 1px no-repeat, linear-gradient(#a0a0a0, #a0a0a0) center / 1px 5px no-repeat; }
.prop-scroll { padding: 5px 0 3px; gap: 6px; background: #1f1f1f; }
.thumb-track { flex: 1; width: 10px; }
.prop-scroll .thumb { display: block; height: 22px; margin-top: 5px; }
.prop-desc { flex: 1; padding: 7px 6px; border: 1px solid #333; line-height: 17px; }
.prop-desc b { color: #e8e8e8; letter-spacing: 0; }

/* status bar */
.statusbar { background: #3d3d3d; display: grid; align-items: center; grid-template-columns: 4px 24px 244px 20px 140px 19px 229px 20px 156px 22px 125px 30px 1fr; color: #d8d8d8; }
.statusbar > .ico { width: 14px; height: 14px; }
.statusbar > .st-bubble { grid-column: 2; width: 16px; height: 16px; }
.statusbar > span { white-space: nowrap; }
.st-drop { display: flex; align-items: center; gap: 6px; }
.up { border: 4px solid transparent; border-bottom: 4px solid #e0e0e0; border-top: 0; }
.bell { position: relative; display: block; width: 16px; }
.bell b { position: absolute; left: 9px; top: 5px; width: 13px; height: 13px; border-radius: 50%; background: #ff7f9c; color: #222; font-size: 10px; line-height: 13px; text-align: center; letter-spacing: 0; }
.resize-grip { width: 8px; height: 8px; justify-self: end; align-self: end; margin: 0 2px 3px 0; background: radial-gradient(circle, #8a8a8a 0.7px, transparent 1px) 0 0 / 2.5px 2.5px; }
```
